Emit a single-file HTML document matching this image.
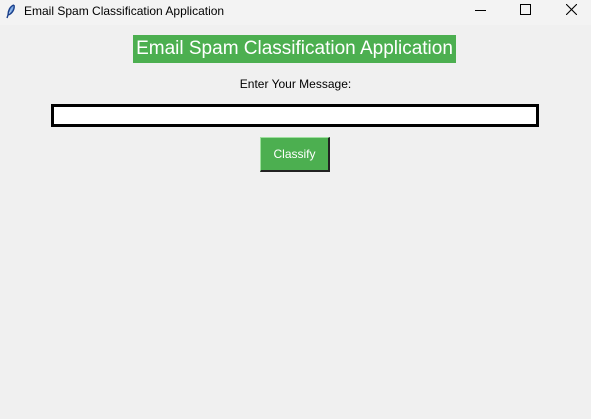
<!DOCTYPE html>
<html><head><meta charset="utf-8"><style>
html,body{margin:0;padding:0;width:591px;height:419px;background:#f0f0f0;overflow:hidden;font-family:"Liberation Sans",sans-serif;position:relative}
.tb{position:absolute;left:0;top:0;width:591px;height:25px;background:#f3f3f3}
.tb .t{position:absolute;left:24px;top:4px;font-size:12px;color:#000}
.ico{position:absolute;left:6px;top:4px}
.lbl{position:absolute;left:133px;top:35px;width:323px;height:28px;background:#4caf50;color:#fff;font-size:19px;line-height:28px;text-align:center}
.p{position:absolute;left:0;width:591px;top:77px;text-align:center;font-size:12px;color:#000}
.e{position:absolute;left:51px;top:104px;width:482px;height:17px;border:3px solid #000;background:#fff}
.b{position:absolute;left:260px;top:137px;width:67px;height:32px;background:#4caf50;border-top:1px solid #9ee09e;border-left:1px solid #9ee09e;border-right:2px solid #222;border-bottom:2px solid #222;color:#fff;font-size:12px;line-height:32px;text-align:center;box-sizing:content-box}
</style></head><body>
<div class="tb">
<svg class="ico" width="10" height="15" viewBox="0 0 10 15"><path d="M8 1 C4 2 2 7 2 11 L1 14 M8 1 C9 5 6 10 2 11" stroke="#1a3f8a" stroke-width="1.4" fill="#6fa0e0"/></svg>
<div class="t">Email Spam Classification Application</div>
<svg style="position:absolute;left:475px;top:10px" width="11" height="2"><rect width="11" height="1" fill="#000"/></svg>
<svg style="position:absolute;left:520px;top:4px" width="11" height="11"><rect x="0.5" y="0.5" width="10" height="10" fill="none" stroke="#000"/></svg>
<svg style="position:absolute;left:566px;top:4px" width="11" height="11"><path d="M0 0L11 11M11 0L0 11" stroke="#000" stroke-width="1.1"/></svg>
</div>
<div class="lbl">Email Spam Classification Application</div>
<div class="p">Enter Your Message:</div>
<div class="e"></div>
<div class="b">Classify</div>
</body></html>
